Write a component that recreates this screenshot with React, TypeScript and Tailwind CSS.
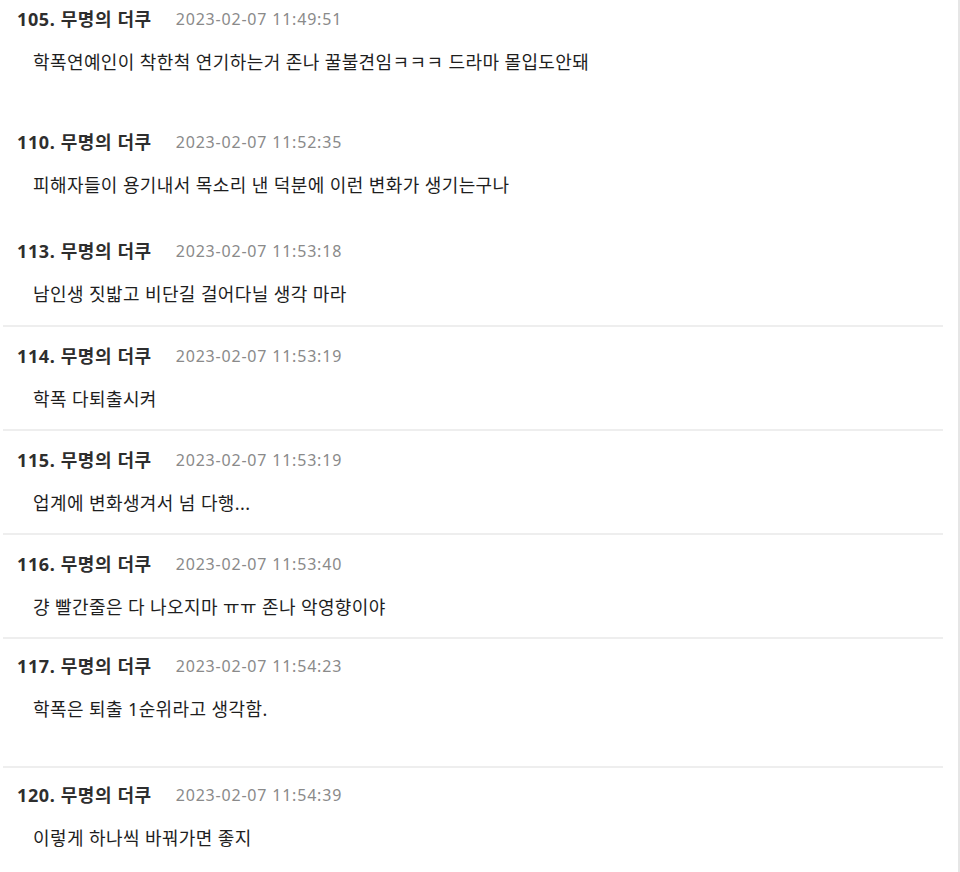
import React from "react";

type Comment = {
  no: number;
  date: string;
  text: string;
  divider: boolean;
  pt: string;
  pb: string;
};

const comments: Comment[] = [
  { no: 105, date: "2023-02-07 11:49:51", text: "학폭연예인이 착한척 연기하는거 존나 꿀불견임ㅋㅋㅋ 드라마 몰입도안돼", divider: false, pt: "pt-[7px]", pb: "pb-[38px]" },
  { no: 110, date: "2023-02-07 11:52:35", text: "피해자들이 용기내서 목소리 낸 덕분에 이런 변화가 생기는구나", divider: false, pt: "pt-[18px]", pb: "pb-[24px]" },
  { no: 113, date: "2023-02-07 11:53:18", text: "남인생 짓밟고 비단길 걸어다닐 생각 마라", divider: true, pt: "pt-[18px]", pb: "pb-[19px]" },
  { no: 114, date: "2023-02-07 11:53:19", text: "학폭 다퇴출시켜", divider: true, pt: "pt-[17px]", pb: "pb-[18px]" },
  { no: 115, date: "2023-02-07 11:53:19", text: "업계에 변화생겨서 넘 다행...", divider: true, pt: "pt-[17px]", pb: "pb-[18px]" },
  { no: 116, date: "2023-02-07 11:53:40", text: "걍 빨간줄은 다 나오지마 ㅠㅠ 존나 악영향이야", divider: true, pt: "pt-[17px]", pb: "pb-[18px]" },
  { no: 117, date: "2023-02-07 11:54:23", text: "학폭은 퇴출 1순위라고 생각함.", divider: true, pt: "pt-[15px]", pb: "pb-[45px]" },
  { no: 120, date: "2023-02-07 11:54:39", text: "이렇게 하나씩 바꿔가면 좋지", divider: false, pt: "pt-[15px]", pb: "pb-[16px]" },
];

const font = { fontFamily: '"Noto Sans", "Noto Sans CJK KR", sans-serif' };

const CommentItem = ({ c }: { c: Comment }) => (
  <div className={`${c.pt} ${c.pb} ${c.divider ? "border-b-2 border-[#eeeeee]" : ""}`}>
    <div className="flex items-center h-6 pl-[14px]">
      <span className="text-[18px] font-bold text-[#2e2e2e] tracking-[0.6px]">{c.no}. 무명의 더쿠</span>
      <span className="ml-[24px] text-[16px] text-[#8a8a8a] tracking-[0.8px]">{c.date}</span>
    </div>
    <div className="h-6 mt-[19px] pl-[30px] flex items-center text-[18px] text-[#1e1e1e] tracking-[0.4px]">{c.text}</div>
  </div>
);

export default function App() {
  return (
    <div className="w-[960px] h-[872px] bg-white flex overflow-hidden" style={font}>
      <div className="w-[943px] pl-[3px]">
        {comments.map((c) => (
          <CommentItem key={c.no} c={c} />
        ))}
      </div>
      <div className="flex-1" />
      <div className="w-[2px] bg-[#e6e6e6]" />
    </div>
  );
}
